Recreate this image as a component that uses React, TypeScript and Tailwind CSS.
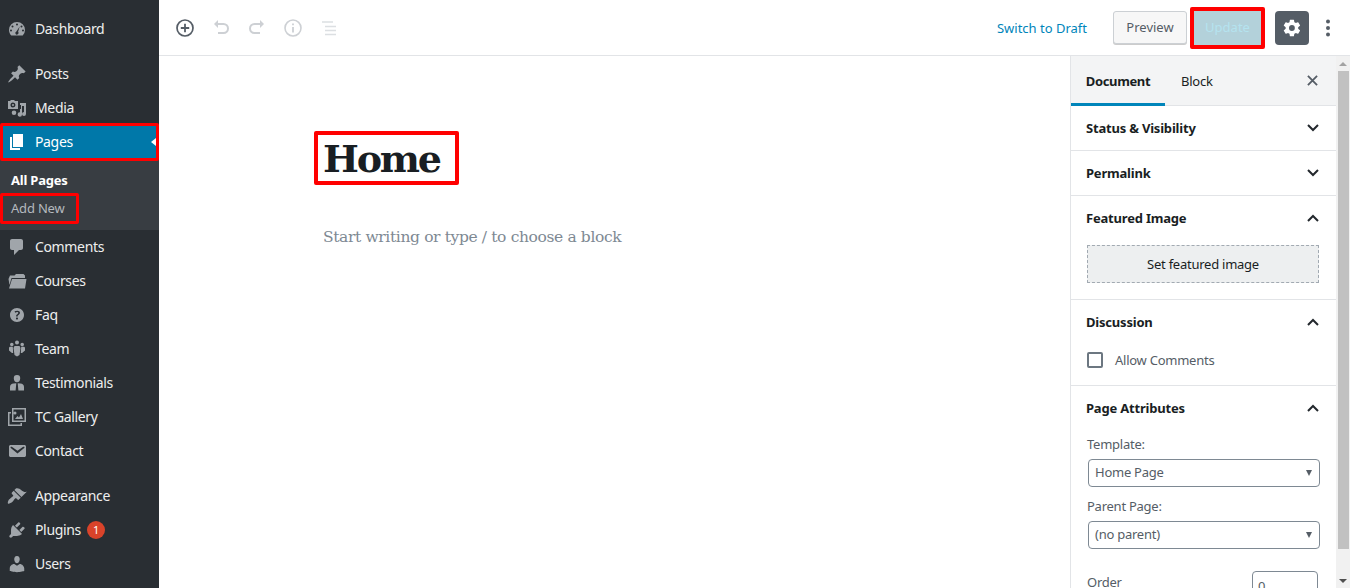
import React from "react";

const uiFont = "font-['Noto_Sans',sans-serif]";

// Dashicons dibujados a mano, viewBox 20x20
const icons: Record<string, React.ReactNode> = {
  dashboard: (
    <path fillRule="evenodd" d="M10 3a8 8 0 0 0-8 8c0 2.2.9 4.2 2.3 5.6h11.4A8 8 0 0 0 18 11a8 8 0 0 0-8-8zM10 4.500a1 1 0 1 1 0 2 1 1 0 0 1 0-2zM5.500 6.500a1 1 0 1 1 0 2 1 1 0 0 1 0-2zM14.500 6.500a1 1 0 1 1 0 2 1 1 0 0 1 0-2zM4 10.500a1 1 0 1 1 0 2 1 1 0 0 1 0-2zM16 10.500a1 1 0 1 1 0 2 1 1 0 0 1 0-2zM12.700 7.500l-1.600 5.300a1.600 1.600 0 1 1-1.700-.4z" />
  ),
  post: (
    <path d="M10.44 3.02l1.82-1.82 6.36 6.35-1.83 1.82c-1.05-.68-2.48-.57-3.41.36l-.75.75c-.92.93-1.04 2.35-.35 3.41l-1.83 1.82-2.41-2.41-2.8 2.79c-.42.42-3.38 2.71-3.8 2.29s1.86-3.39 2.28-3.81l2.79-2.79L4.1 9.36l1.83-1.82c1.05.69 2.48.57 3.4-.36l.75-.75c.93-.92 1.05-2.35.36-3.41z" />
  ),
  media: (
    <path fillRule="evenodd" d="M4 2h3l1 1h3v8H1V3h2zM6 4.500a2.500 2.500 0 1 0 0 5 2.500 2.500 0 0 0 0-5zM13 5h6v11a2 2 0 1 1-2-2V8h-2v8.500a2.200 2.200 0 1 1-2-2.200V11h1V7h-1zM6 6a1 1 0 1 1 0 2 1 1 0 0 1 0-2zM7 12.500a2.300 2.300 0 1 1 0 4.600 2.300 2.300 0 0 1 0-4.600z" />
  ),
  page: <path d="M6 15V2h10v13H6zm-1 1h8v2H3V5h2v11z" />,
  comments: (
    <path d="M5 2h9c1.1 0 2 .9 2 2v7c0 1.1-.9 2-2 2h-2l-5 5v-5H5c-1.1 0-2-.9-2-2V4c0-1.1.9-2 2-2z" />
  ),
  folder: (
    <path d="M1.500 8L3 4.500h4.500L9 3h7.500l1.500 1.500V7H4.500L2.500 14zM5 8h14.500L18 17.500H2z" />
  ),
  help: (
    <path d="M17 10c0-3.87-3.14-7-7-7-3.87 0-7 3.13-7 7s3.13 7 7 7c3.86 0 7-3.13 7-7zm-6.3 1.48H9.14v-.43c0-.38.08-.7.24-.98s.46-.57.88-.89c.41-.29.68-.53.81-.71.14-.18.2-.39.2-.62 0-.25-.09-.44-.28-.58-.19-.13-.45-.19-.79-.19-.58 0-1.25.19-2 .57l-.64-1.28c.87-.49 1.8-.74 2.77-.74.81 0 1.45.2 1.92.58.48.39.71.91.71 1.55 0 .43-.09.8-.29 1.11-.19.32-.57.67-1.11 1.06-.38.28-.61.49-.71.63-.1.15-.15.34-.15.57v.35zm-1.47 2.74c-.18-.17-.27-.42-.27-.73 0-.33.08-.58.26-.75s.43-.25.77-.25c.32 0 .57.09.75.26s.27.42.27.74c0 .3-.09.55-.27.72-.18.18-.43.27-.75.27-.33 0-.58-.09-.76-.26z" />
  ),
  groups: (
    <path d="M8 3.500a2 2 0 1 1 4 0 2 2 0 0 1-4 0zM3 5.500a1.800 1.800 0 1 1 3.600 0 1.800 1.800 0 0 1-3.600 0zM13.400 5.500a1.800 1.800 0 1 1 3.600 0 1.800 1.800 0 0 1-3.600 0zM2 9c0-.8.7-1.300 1.500-1.300h2.300L6.200 14H5l-3-2.500zM18 9c0-.8-.7-1.300-1.500-1.300h-2.300l-.4 6.300H15l3-2.500zM7.500 7h5L13.500 9l-1 7L10 17.500 7.500 16l-1-7z" />
  ),
  person: (
    <path fillRule="evenodd" d="M10 2a3.200 3.200 0 0 1 3.200 3.400C13.100 7.400 12 9.300 10 9.300S6.900 7.400 6.800 5.400A3.200 3.200 0 0 1 10 2zM6.500 10.500l2.800-.3-.7 7.300H3v-3.500c0-2 1.500-3.500 3.500-3.500zM13.500 10.500c2 0 3.500 1.500 3.500 3.500v3.500h-5.600l-.7-7.300z" />
  ),
  gallery: (
    <path fillRule="evenodd" d="M5 1h14v14H5zM6.500 2.500v11h11v-11zM1 5h3v1.500H2.500v11h11V16H15v3H1zM8 4.500a1.500 1.500 0 1 1 0 3 1.500 1.500 0 0 1 0-3zM8 12l2.500-3 1.500 1.500L14 7l2 5z" />
  ),
  email: (
    <path d="M3.870 4h13.250C18.370 4 19 4.590 19 5.790v8.420c0 1.190-.63 1.790-1.880 1.790H3.870c-1.250 0-1.880-.6-1.880-1.790V5.790c0-1.200.63-1.790 1.880-1.790zm6.620 8.600l6.740-5.530c.24-.2.43-.66.13-1.070-.29-.41-.82-.42-1.170-.17l-5.700 3.860L4.800 5.830c-.35-.25-.88-.24-1.170.17-.3.41-.11.870.13 1.070z" />
  ),
  brush: (
    <path d="M14.480 11.060L7.410 3.990l1.500-1.500c.5-.56 2.300-.47 3.510.32 1.210.8 1.430 1.280 2.910 2.100 1.180.64 2.450 1.260 4.450.85zm-.71.71L6.700 4.700 4.930 6.470c-.39.39-.39 1.020 0 1.410l1.060 1.060c.39.39.39 1.030 0 1.420-.6.6-1.430 1.110-2.210 1.690-.35.26-.7.53-1.010.84C1.430 13.230.4 16.850 1.020 17.500c.54.57 3.110-.36 4.500-1.740.31-.31.590-.65.850-1.010.58-.78 1.090-1.600 1.690-2.210.39-.39 1.020-.39 1.410 0l1.060 1.060c.39.39 1.020.39 1.410 0z" />
  ),
  plugin: (
    <path d="M13.110 4.360L9.870 7.600 8 5.730l3.240-3.240c.35-.34 1.050-.2 1.560.32.52.51.66 1.210.31 1.550zm-8 1.770l.91-1.120 9.010 9.010-1.190.84c-.71.71-2.630 1.160-3.820 1.160H6.140L4.900 17.260c-.59.59-1.540.59-2.120 0-.59-.58-.59-1.530 0-2.120l1.240-1.240v-3.880c0-1.130.4-3.190 1.090-3.890zm7.260 3.970l3.240-3.240c.34-.35 1.040-.21 1.550.31.52.51.66 1.210.31 1.550l-3.240 3.250z" />
  ),
  user: (
    <path d="M10 9.250c-2.270 0-2.730-3.440-2.730-3.440C7 4.020 7.820 2 9.970 2c2.160 0 2.980 2.020 2.710 3.810 0 0-.41 3.440-2.680 3.440zm0 2.570L12.720 10c2.390 0 4.520 2.330 4.520 4.530v2.490s-3.650 1.130-7.240 1.130c-3.650 0-7.240-1.130-7.240-1.130v-2.490c0-2.250 1.940-4.480 4.470-4.480z" />
  ),
};

const MenuIcon = ({ name, white }: { name: string; white?: boolean }) => (
  <svg
    viewBox="0 0 20 20"
    className={white ? "w-5 h-5 fill-white shrink-0" : "w-5 h-5 fill-[#a0a5aa] shrink-0"}
  >
    {icons[name]}
  </svg>
);

const MenuItem = ({ icon, label, badge }: { icon: string; label: string; badge?: string }) => (
  <div className="h-[34px] flex items-center pl-[7px] text-[14px] tracking-[-0.35px] text-[#eeeeee]">
    <MenuIcon name={icon} />
    <span className="ml-2 pb-[2px]">{label}</span>
    {badge && (
      <span className="ml-[6px] w-[18px] h-[18px] rounded-full bg-[#d9432a] text-white text-[11px] flex items-center justify-center">
        {badge}
      </span>
    )}
  </div>
);

const Sidebar = () => (
  <aside className="w-[159px] shrink-0 bg-[#292e33] pt-3">
    <MenuItem icon="dashboard" label="Dashboard" />
    <div className="mt-[11px]">
      <MenuItem icon="post" label="Posts" />
      <MenuItem icon="media" label="Media" />
    </div>
    {/* Pages, resaltado en rojo */}
    <div className="relative h-[38px] -my-[2px] border-[3px] border-[#ff0000] rounded-[2px] bg-[#0078a9] flex items-center pl-[4px] text-[14px] tracking-[-0.35px] text-white">
      <MenuIcon name="page" white />
      <span className="ml-2 pb-[2px]">Pages</span>
      <span className="absolute right-0 top-[12px] w-0 h-0 border-y-[4px] border-y-transparent border-r-[5px] border-r-white" />
    </div>
    <div className="h-[71px] bg-[#383d42] pt-[11px] text-[13px] tracking-[-0.2px]">
      <div className="pl-[11px] h-[20px] leading-[20px] font-bold text-white">All Pages</div>
      <div className="w-[79px] h-[31px] mt-[3px] border-[3px] border-[#ff0000] rounded-[2px] pl-2 leading-[24px] text-[#b4b9be]">
        Add New
      </div>
    </div>
    <MenuItem icon="comments" label="Comments" />
    <MenuItem icon="folder" label="Courses" />
    <MenuItem icon="help" label="Faq" />
    <MenuItem icon="groups" label="Team" />
    <MenuItem icon="person" label="Testimonials" />
    <MenuItem icon="gallery" label="TC Gallery" />
    <MenuItem icon="email" label="Contact" />
    <div className="mt-[11px]">
      <MenuItem icon="brush" label="Appearance" />
      <MenuItem icon="plugin" label="Plugins" badge="1" />
      <MenuItem icon="user" label="Users" />
    </div>
  </aside>
);

const ToolButton = ({ children }: { children: React.ReactNode }) => (
  <button className="w-9 h-9 flex items-center justify-center">{children}</button>
);

const Topbar = () => (
  <header className="h-[56px] shrink-0 border-b border-[#e2e4e7] bg-white flex items-center pl-2 pr-[19px]">
    <ToolButton>
      <svg viewBox="0 0 20 20" className="w-5 h-5">
        <circle cx="10" cy="10" r="8" fill="none" stroke="#555d66" strokeWidth="1.700" />
        <path d="M10 5.800v8.400M5.800 10h8.400" stroke="#555d66" strokeWidth="1.800" />
      </svg>
    </ToolButton>
    <ToolButton>
      <svg viewBox="0 0 20 20" className="w-5 h-5 fill-none stroke-[#cdd0d4]" strokeWidth="2">
        <path d="M4 6h8.500a4.500 4.500 0 0 1 0 9H7" />
        <path d="M8 2L4 6l4 4" fill="#cdd0d4" stroke="none" transform="translate(-1 0)" />
      </svg>
    </ToolButton>
    <ToolButton>
      <svg viewBox="0 0 20 20" className="w-5 h-5 fill-none stroke-[#cdd0d4]" strokeWidth="2">
        <path d="M16 6H7.500a4.500 4.500 0 0 0 0 9H13" />
        <path d="M12 2l4 4-4 4" fill="#cdd0d4" stroke="none" transform="translate(1 0)" />
      </svg>
    </ToolButton>
    <ToolButton>
      <svg viewBox="0 0 20 20" className="w-5 h-5">
        <circle cx="10" cy="10" r="8" fill="none" stroke="#cdd0d4" strokeWidth="1.600" />
        <path d="M10 9v5.500M10 5.500v1.800" stroke="#cdd0d4" strokeWidth="1.800" />
      </svg>
    </ToolButton>
    <ToolButton>
      <svg viewBox="0 0 20 20" className="w-5 h-5 stroke-[#dcdfe2]" strokeWidth="1.500">
        <path d="M3 4h11M6 8.500h11M6 12.500h11M6 16.500h11" />
      </svg>
    </ToolButton>
    <div className={`ml-auto flex items-center text-[13px] ${uiFont}`}>
      <a className="text-[#0085ba] mr-[26px] pt-[2px]">Switch to Draft</a>
      <button className="w-[74px] h-[33px] pt-px rounded-[3px] border border-[#ccd0d4] bg-[#f7f7f7] text-[#555d66] shadow-[0_1px_0_#ccc]">
        Preview
      </button>
      <div className="ml-[3px] w-[75px] h-[42px] pt-px border-[4px] border-[#ff0000] rounded-[2px] bg-[#b3d1da] text-[#b5e3ef] flex items-center justify-center">
        Update
      </div>
      <button className="ml-[10px] w-[34px] h-[34px] rounded-[4px] bg-[#555d66] flex items-center justify-center">
        <svg viewBox="0 0 24 24" className="w-[20px] h-[20px] fill-white">
          <path d="M19.400 13c.04-.33.06-.66.06-1s-.02-.67-.06-1l2.100-1.640a.5.5 0 0 0 .12-.64l-2-3.460a.5.5 0 0 0-.61-.22l-2.490 1a7.300 7.300 0 0 0-1.730-1l-.38-2.650A.5.5 0 0 0 13.900 2h-4a.5.5 0 0 0-.49.42l-.38 2.650c-.62.25-1.200.59-1.730 1l-2.490-1a.5.5 0 0 0-.61.22l-2 3.460a.5.5 0 0 0 .12.64L4.420 11c-.04.33-.07.67-.07 1s.03.67.07 1l-2.100 1.640a.5.5 0 0 0-.12.64l2 3.460c.12.22.39.3.61.22l2.490-1c.53.41 1.110.75 1.730 1l.38 2.650c.04.24.25.42.49.42h4c.25 0 .46-.18.49-.42l.38-2.650a7.300 7.300 0 0 0 1.730-1l2.490 1c.22.08.49 0 .61-.22l2-3.460a.5.5 0 0 0-.12-.64zM11.900 15.500a3.500 3.500 0 1 1 0-7 3.500 3.500 0 0 1 0 7z" />
        </svg>
      </button>
      <svg viewBox="0 0 6 20" className="ml-4 w-[6px] h-5 fill-[#555d66]">
        <circle cx="3" cy="3.500" r="2" />
        <circle cx="3" cy="10" r="2" />
        <circle cx="3" cy="16.500" r="2" />
      </svg>
    </div>
  </header>
);

const Chevron = ({ up }: { up?: boolean }) => (
  <svg viewBox="0 0 12 8" className="w-3 h-2 fill-none stroke-[#23282d]" strokeWidth="2">
    <path d={up ? "M1 7l5-5 5 5" : "M1 1l5 5 5-5"} />
  </svg>
);

const PanelHead = ({ title, up }: { title: string; up?: boolean }) => (
  <div className="h-[44px] pl-[15px] pr-[17px] flex items-center justify-between text-[13px] font-bold tracking-[-0.2px] text-[#191e23]">
    <span className="pt-[2px]">{title}</span>
    <Chevron up={up} />
  </div>
);

const FakeSelect = ({ value }: { value: string }) => (
  <div className="ml-[17px] w-[232px] h-[28px] rounded-[4px] border border-[#7e8993] pl-[6px] pr-[7px] flex items-center justify-between text-[13px] text-[#555d66]">
    <span>{value}</span>
    <span className="w-0 h-0 border-x-[3px] border-x-transparent border-t-[6px] border-t-[#555d66]" />
  </div>
);

const SettingsPanel = () => (
  <aside className={`w-[266px] shrink-0 border-l border-[#e2e4e7] bg-white text-[13px] tracking-[-0.25px] ${uiFont}`}>
    <div className="h-[50px] bg-[#f3f4f5] border-b border-[#e2e4e7] flex items-stretch text-[13px] text-[#191e23]">
      <div className="w-[94px] pt-[5px] border-b-[3px] border-[#0085ba] -mb-px font-bold tracking-[-0.35px] flex items-center justify-center">
        Document
      </div>
      <div className="ml-[16px] pt-[2px] flex items-center">Block</div>
      <svg viewBox="0 0 12 12" className="ml-auto mr-[18px] self-center w-[11px] h-[11px] stroke-[#555d66]" strokeWidth="2">
        <path d="M1 1l10 10M11 1L1 11" />
      </svg>
    </div>
    <div className="border-b border-[#e2e4e7] h-[45px]">
      <PanelHead title="Status & Visibility" />
    </div>
    <div className="border-b border-[#e2e4e7] h-[45px]">
      <PanelHead title="Permalink" />
    </div>
    <div className="border-b border-[#e2e4e7] h-[104px]">
      <PanelHead title="Featured Image" up />
      <div className="ml-[16px] mt-[5px] w-[232px] h-[38px] pt-[2px] bg-[#edeff0] border border-dashed border-[#a2aab2] flex items-center justify-center text-[#191e23]">
        Set featured image
      </div>
    </div>
    <div className="border-b border-[#e2e4e7] h-[86px]">
      <PanelHead title="Discussion" up />
      <div className="ml-[16px] mt-[8px] h-4 flex items-center text-[#555d66]">
        <span className="w-4 h-4 rounded-[2px] border-2 border-[#6c7781]" />
        <span className="ml-3 pt-[2px]">Allow Comments</span>
      </div>
    </div>
    <PanelHead title="Page Attributes" up />
    <div className="ml-[16px] mt-[5px] mb-[6px] leading-[18px] text-[#555d66]">Template:</div>
    <FakeSelect value="Home Page" />
    <div className="ml-[16px] mt-[10px] mb-[6px] leading-[18px] text-[#555d66]">Parent Page:</div>
    <FakeSelect value="(no parent)" />
    <div className="mt-[22px] pl-[16px] pr-[18px] flex items-start justify-between text-[#555d66]">
      <span className="mt-[2px]">Order</span>
      <div className="w-[66px] h-[30px] rounded-[4px] border border-[#7e8993] pl-[5px] leading-[28px]">0</div>
    </div>
  </aside>
);

const Scrollbar = () => (
  <div className="w-[14px] shrink-0 bg-[#f1f1f1] flex flex-col items-center">
    <div className="h-[15px] flex items-center justify-center">
      <span className="w-0 h-0 border-x-[4px] border-x-transparent border-b-[4px] border-b-[#a3a3a3]" />
    </div>
    <div className="w-[11px] h-[478px] bg-[#c1c1c1]" />
    <div className="mt-auto h-[15px] flex items-center justify-center">
      <span className="w-0 h-0 border-x-[4px] border-x-transparent border-t-[4px] border-t-[#505050]" />
    </div>
  </div>
);

export default function App() {
  return (
    <div className={`flex h-screen overflow-hidden bg-white ${uiFont}`}>
      <Sidebar />
      <main className="flex-1 min-w-0 flex flex-col">
        <Topbar />
        <div className="flex-1 min-h-0 flex">
          {/* Zona del editor */}
          <div className="flex-1 min-w-0 pt-[75px] pl-[155px]">
            <div className="w-[145px] h-[54px] pt-[1px] border-[4px] border-[#ff0000] rounded-[2px] pl-[5px] flex items-center font-['DejaVu_Serif',serif] font-bold text-[38px] tracking-[-2.2px] text-[#191e23]">
              Home
            </div>
            <p className="mt-[39px] ml-[9px] font-['DejaVu_Serif',serif] text-[15.5px] leading-[26px] tracking-[-0.37px] text-[#7e8993]">
              Start writing or type / to choose a block
            </p>
          </div>
          <SettingsPanel />
          <Scrollbar />
        </div>
      </main>
    </div>
  );
}
